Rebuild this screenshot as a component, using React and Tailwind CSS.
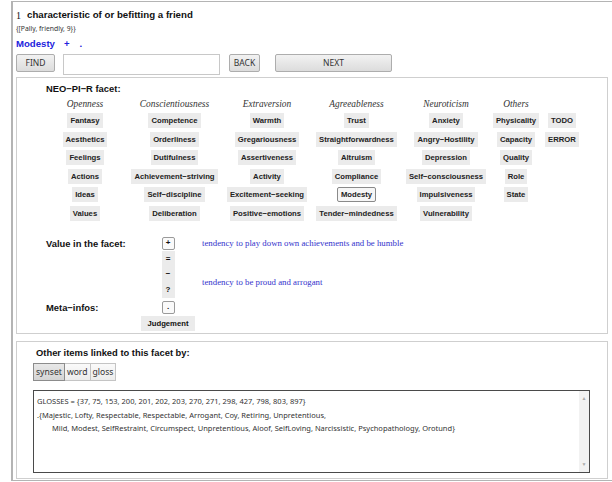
import React from 'react';

const sans = "font-['Liberation_Sans',Arial,sans-serif]";
const serif = "font-['Liberation_Serif','Times_New_Roman',serif]";
const ui = "font-['Noto_Sans','Open_Sans',sans-serif]";

// facet columns: header, width of the column, left margin, chips
const columns = [
  { title: 'Openness', cls: 'w-[60px]', items: ['Fantasy', 'Aesthetics', 'Feelings', 'Actions', 'Ideas', 'Values'] },
  { title: 'Conscientiousness', cls: 'w-[89px] ml-[15px]', items: ['Competence', 'Orderliness', 'Dutifulness', 'Achievement−striving', 'Self−discipline', 'Deliberation'] },
  { title: 'Extraversion', cls: 'w-[88px] ml-[4px]', items: ['Warmth', 'Gregariousness', 'Assertiveness', 'Activity', 'Excitement−seeking', 'Positive−emotions'] },
  { title: 'Agreeableness', cls: 'w-[89px] ml-px', items: ['Trust', 'Straightforwardness', 'Altruism', 'Compliance', 'Modesty', 'Tender−mindedness'] },
  { title: 'Neuroticism', cls: 'w-[88px] ml-px', items: ['Anxiety', 'Angry−Hostility', 'Depression', 'Self−consciousness', 'Impulsiveness', 'Vulnerability'] },
  { title: 'Others', cls: 'w-[48px] ml-[2px]', items: ['Physicality', 'Capacity', 'Quality', 'Role', 'State'] },
  { title: '', cls: 'w-[40px] ml-[2px]', items: ['TODO', 'ERROR'] },
];

const SELECTED = 'Modesty';

function Chip({ label }) {
  const active = label === SELECTED;
  return (
    <span
      className={
        active
          ? 'h-[15px] leading-[13px] px-[3px] text-[7.7px] font-bold text-[#222] bg-[#f6f6f6] border border-[#8a8a8a] rounded-[2px] whitespace-nowrap'
          : 'h-[15px] leading-[15px] px-[3px] text-[7.7px] font-bold text-[#222] bg-[#ebebeb] whitespace-nowrap'
      }
    >
      {label}
    </span>
  );
}

function WinButton({ children, className }) {
  return (
    <button
      className={`h-[18px] border border-[#adadad] rounded-[2px] bg-gradient-to-b from-[#f2f2f2] to-[#dcdcdc] text-[8.5px] text-[#333] ${ui} ${className}`}
    >
      {children}
    </button>
  );
}

function SmallKey({ children }) {
  return (
    <span className="w-[13px] h-[13px] flex items-center justify-center border border-[#9a9a9a] rounded-[2px] bg-[#fafafa] text-[8px] font-bold leading-none">
      {children}
    </span>
  );
}

export default function App() {
  return (
    <div className={`w-[612px] h-[482px] bg-white overflow-hidden text-[#111] ${sans}`}>
      <div className="ml-[11px] mt-px h-[480px] border-l-2 border-t border-b border-[#b4b4b4] pl-[3px] pr-[4px]">
        {/* title block */}
        <div className="pt-[6px] h-[21px] flex items-center gap-[6px]">
          <span className={`text-[10px] ${serif}`}>1</span>
          <span className="text-[9.7px] font-bold">characteristic of or befitting a friend</span>
        </div>
        <div className={`h-[13px] flex items-center text-[6.8px] text-[#333] ${ui}`}>{'{[Pally, friendly, 9}}'}</div>
        <div className="h-[16px] flex items-center text-[9.6px] font-bold text-[#2222dd]">
          <span>Modesty</span>
          <span className="ml-[9px]">+</span>
          <span className="ml-[10px]">.</span>
        </div>
        <div className="h-[24px] flex items-start pt-[2px]">
          <WinButton className="w-[39px]">FIND</WinButton>
          <input className="ml-[8px] w-[157px] h-[21px] border border-[#c8c8c8] bg-white outline-none" />
          <WinButton className="ml-[9px] w-[31px]">BACK</WinButton>
          <WinButton className="ml-[15px] w-[117px]">NEXT</WinButton>
        </div>

        {/* NEO-PI-R panel */}
        <div className="mt-px h-[257px] border border-[#cfcfcf]">
          <div className="pl-[29px] pt-[5px] text-[9.4px] font-bold leading-[12px]">NEO−PI−R facet:</div>
          <div className="flex ml-[38px] mt-[3px]">
            {columns.map((col) => (
              <div key={col.title || 'extra'} className={`flex flex-col items-center ${col.cls}`}>
                <div className={`h-[12px] leading-[12px] text-[9.4px] italic text-[#333] ${serif}`}>{col.title}</div>
                <div className="mt-[3px] flex flex-col items-center gap-[3.5px]">
                  {col.items.map((it) => (
                    <Chip key={it} label={it} />
                  ))}
                </div>
              </div>
            ))}
          </div>

          {/* value in the facet */}
          <div className="mt-[16px] flex">
            <div className="w-[124px] pl-[29px] flex flex-col">
              <div className="h-[13px] leading-[13px] text-[9.4px] font-bold">Value in the facet:</div>
              <div className="mt-[51px] h-[13px] leading-[13px] text-[9.4px] font-bold">Meta−infos:</div>
            </div>
            <div className="w-[54px] flex flex-col items-center">
              <SmallKey>+</SmallKey>
              <div className="mt-px w-[13px] h-[47px] bg-[#ebebeb] flex flex-col items-center text-[8px] font-bold">
                <span className="h-[15px] leading-[15px]">=</span>
                <span className="h-[16px] leading-[16px]">−</span>
                <span className="h-[16px] leading-[16px]">?</span>
              </div>
              <div className="mt-[3px]">
                <SmallKey>.</SmallKey>
              </div>
              <span className="mt-[2px] h-[15px] leading-[15px] px-[6px] text-[7.7px] font-bold bg-[#ebebeb]">Judgement</span>
            </div>
            <div className={`ml-[7px] text-[8.8px] text-[#3434cc] ${serif}`}>
              <div className="h-[13px] leading-[13px]">tendency to play down own achievements and be humble</div>
              <div className="mt-[26px] h-[13px] leading-[13px]">tendency to be proud and arrogant</div>
            </div>
          </div>
        </div>

        {/* linked items panel */}
        <div className="mt-[7px] h-[138px] border border-[#cfcfcf]">
          <div className="pl-[19px] pt-[5px] text-[9.4px] font-bold leading-[12px]">Other items linked to this facet by:</div>
          <div className={`ml-[16px] mt-[4px] flex text-[8.6px] text-[#333] ${ui}`}>
            <span className="h-[18px] leading-[16px] px-[2px] border border-[#8c8c8c] bg-gradient-to-b from-[#e8e8e8] to-[#d4d4d4]">synset</span>
            <span className="h-[18px] leading-[16px] px-[2px] border border-l-0 border-[#c4c4c4] bg-gradient-to-b from-[#fafafa] to-[#ececec]">word</span>
            <span className="h-[18px] leading-[16px] px-[2px] border border-l-0 border-[#c4c4c4] bg-gradient-to-b from-[#fafafa] to-[#ececec]">gloss</span>
          </div>
          <div className="ml-[16px] mt-[9px] mr-[17px] h-[83px] border border-[#4a4a4a] flex">
            <div className={`flex-1 pl-[3px] pt-[4px] text-[7.5px] text-[#333] leading-[13.5px] ${ui}`}>
              <div>GLOSSES = {'{'}37, 75, 153, 200, 201, 202, 203, 270, 271, 298, 427, 798, 803, 897{'}'}</div>
              <div>.{'{'}Majestic, Lofty, Respectable, Respectable, Arrogant, Coy, Retiring, Unpretentious,</div>
              <div className="pl-[15px]">
                Mild, Modest, SelfRestraint, Circumspect, Unpretentious, Aloof, SelfLoving, Narcissistic, Psychopathology, Orotund{'}'}
              </div>
            </div>
            {/* scrollbar */}
            <div className="w-[10px] bg-[#f2f2f2] flex flex-col items-center justify-between py-[4px] text-[5px] text-[#aaa]">
              <span>▲</span>
              <span>▼</span>
            </div>
          </div>
        </div>
      </div>
    </div>
  );
}
